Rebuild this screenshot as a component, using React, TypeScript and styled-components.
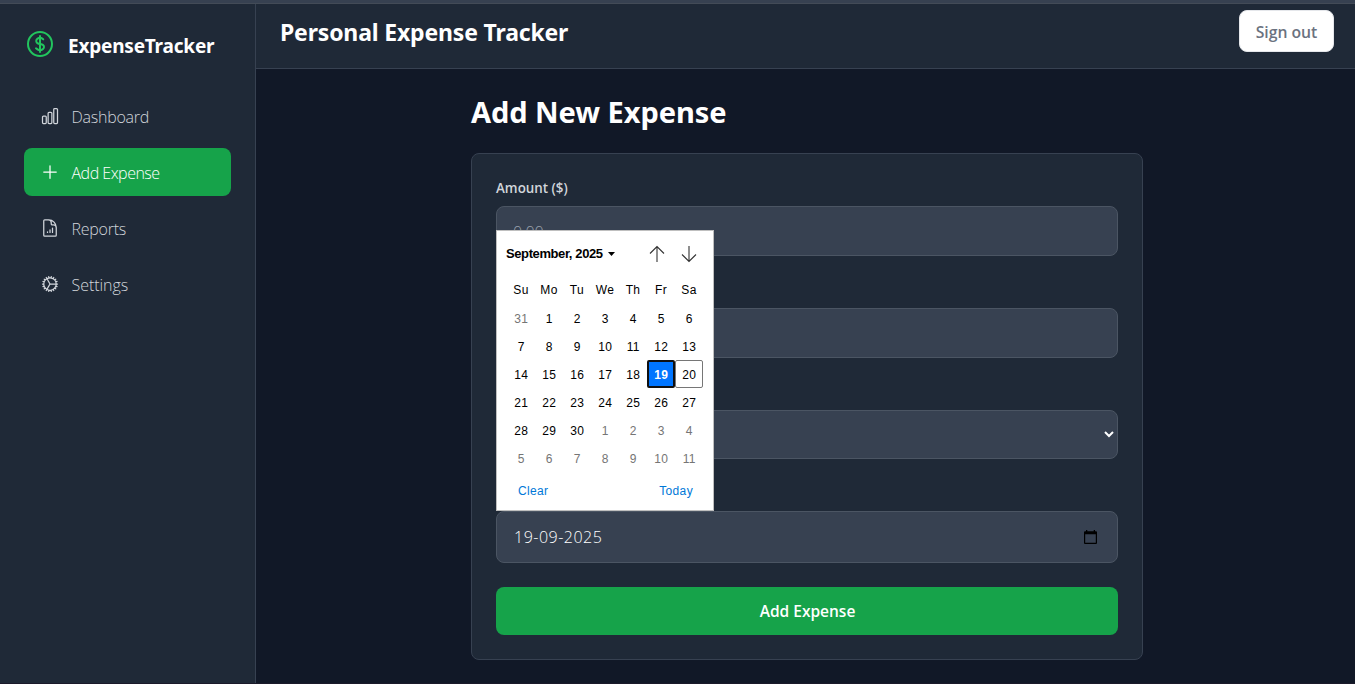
import React from 'react';
import styled, { createGlobalStyle, css } from 'styled-components';
import {
  HiOutlineChartBar,
  HiOutlineCog,
  HiOutlineCurrencyDollar,
  HiOutlineDocumentChartBar,
  HiOutlinePlus,
} from 'react-icons/hi2';
import type { IconType } from 'react-icons';

const GlobalStyle = createGlobalStyle`
  *, *::before, *::after { box-sizing: border-box; }
  body {
    margin: 0;
    background: #111827;
    font-family: 'Open Sans', 'Noto Sans', sans-serif;
    color: #fff;
  }
`;

const Page = styled.div`
  display: flex;
  flex-direction: column;
  height: 684px;
  overflow: hidden;
  border-bottom: 1px solid #1b1a2a;
`;

const TopStrip = styled.div`
  flex: none;
  height: 4px;
  background: #374151;
  border-bottom: 1px solid #434b57;
`;

const Shell = styled.div`
  flex: 1;
  display: flex;
  min-height: 0;
`;

const Sidebar = styled.aside`
  width: 256px;
  flex: none;
  padding: 24px;
  background: #1f2937;
  border-right: 1px solid #374151;
`;

const Brand = styled.div`
  display: flex;
  align-items: center;
  height: 32px;
  color: #22c55e;
`;

const BrandName = styled.span`
  margin: 4px 0 0 12px;
  font: 700 19px/28px 'Noto Sans', sans-serif;
  letter-spacing: -0.2px;
  color: #fff;
`;

const Nav = styled.nav`
  display: grid;
  gap: 8px;
  margin-top: 32px;
`;

const NavItem = styled.a<{ $active?: boolean; $tracking?: number }>`
  display: flex;
  align-items: center;
  gap: 11.5px;
  height: 48px;
  padding: 0 16px;
  border-radius: 8px;
  font-size: 16px;
  font-weight: 300;
  letter-spacing: ${(p) => p.$tracking ?? -0.25}px;
  color: ${(p) => (p.$active ? '#fff' : '#d1d5db')};
  background: ${(p) => (p.$active ? '#16a34a' : 'transparent')};
`;

const NavLabel = styled.span`
  padding-top: 2px;
`;

const Content = styled.div`
  flex: 1;
  display: flex;
  flex-direction: column;
  min-width: 0;
`;

const Header = styled.header`
  display: flex;
  justify-content: space-between;
  align-items: flex-start;
  height: 65px;
  padding: 6px 21px 0 24px;
  background: #1f2937;
  border-bottom: 1px solid #374151;
`;

const HeaderTitle = styled.h1`
  margin: 6px 0 0;
  font: 700 23px/32px 'Noto Sans', sans-serif;
  letter-spacing: -0.17px;
`;

const SignOut = styled.button`
  height: 42px;
  width: 95px;
  padding: 1px 0 0;
  border: 1px solid #e5e7eb;
  border-radius: 8px;
  background: #fff;
  color: #6b7280;
  font: 600 15.75px/24px 'Open Sans', sans-serif;
`;

const Main = styled.main`
  width: 672px;
  margin: 25px 0 0 215px;
`;

const PageTitle = styled.h2`
  margin: 0 0 23px;
  font: 700 29px/36px 'Noto Sans', sans-serif;
  letter-spacing: -0.05px;
`;

const Card = styled.form`
  padding: 24px;
  border: 1px solid #374151;
  border-radius: 8px;
  background: #1f2937;
`;

const Field = styled.div`
  position: relative;
  margin-bottom: 24px;
`;

const Label = styled.label`
  display: block;
  height: 20px;
  margin-bottom: 8px;
  font-size: 13.4px;
  font-weight: 600;
  line-height: 20px;
  color: #d1d5db;
`;

const controlStyle = css`
  display: flex;
  align-items: center;
  justify-content: space-between;
  border: 1px solid #4b5563;
  border-radius: 8px;
  background: #374151;
  font-size: 16px;
  font-weight: 300;
`;

const Control = styled.div<{ $height?: number; $muted?: boolean }>`
  ${controlStyle}
  padding: 1px 16px 0;
  height: ${(p) => p.$height ?? 50}px;
  letter-spacing: ${(p) => (p.$muted ? -0.2 : 0.5)}px;
  color: ${(p) => (p.$muted ? '#9ca3af' : '#fff')};
`;

const SelectControl = styled(Control)`
  justify-content: flex-end;
  padding: 0 3px 0 16px;
`;

const DateControl = styled(Control)`
  padding: 0 20px 0 17px;
`;

const Submit = styled.button`
  display: block;
  width: 100%;
  height: 48px;
  padding: 0 0 0 1px;
  border: 0;
  border-radius: 8px;
  background: #16a34a;
  color: #fff;
  font: 600 15.5px/24px 'Open Sans', sans-serif;
`;

const Picker = styled.div`
  position: absolute;
  left: 0;
  bottom: 52px;
  width: 218px;
  height: 281px;
  padding: 9px 10px 0;
  border: 1px solid #bfbfbf;
  background: #fff;
  color: #000;
  font: 400 12px/28px 'Liberation Sans', Arial, sans-serif;
  letter-spacing: 0.35px;
`;

const PickerHead = styled.div`
  display: flex;
  align-items: center;
  height: 28px;
`;

const Month = styled.span`
  flex: 1;
  display: flex;
  align-items: center;
  gap: 5px;
  margin-left: -1px;
  font-size: 13px;
  font-weight: 700;
  letter-spacing: -0.4px;
`;

const Arrow = styled.svg`
  width: 16px;
  height: 18px;
  margin-right: 6px;
  margin-left: 10px;
  fill: none;
  stroke: #333;
  stroke-width: 1.1;
`;

const Grid = styled.div<{ $head?: boolean }>`
  display: grid;
  grid-template-columns: repeat(7, 28px);
  grid-auto-rows: 28px;
  margin-top: ${(p) => (p.$head ? 8 : 0)}px;
  text-align: center;
`;

type DayKind = 'other' | 'selected' | 'today' | 'normal';

const Day = styled.span<{ $kind: DayKind }>`
  display: flex;
  align-items: center;
  justify-content: center;
  padding: 1px 0 0 0.5px;
  line-height: 14px;
  color: ${(p) => (p.$kind === 'other' ? '#757575' : p.$kind === 'selected' ? '#fff' : '#000')};
  ${(p) =>
    p.$kind === 'selected' &&
    css`
      border: 2px solid #101010;
      border-radius: 2px;
      background: #0075ff;
      font-weight: 700;
    `}
  ${(p) =>
    p.$kind === 'today' &&
    css`
      border: 1px solid #767676;
      border-radius: 2px;
    `}
`;

const PickerFoot = styled.div`
  display: flex;
  justify-content: space-between;
  margin-top: 5px;
  padding: 0 10px 0 11px;
  color: #0078d7;
`;

const links: { label: string; icon: IconType; active?: boolean; tracking?: number }[] = [
  { label: 'Dashboard', icon: HiOutlineChartBar },
  { label: 'Add Expense', icon: HiOutlinePlus, active: true, tracking: -0.5 },
  { label: 'Reports', icon: HiOutlineDocumentChartBar },
  { label: 'Settings', icon: HiOutlineCog, tracking: -0.05 },
];

const weekdays = ['Su', 'Mo', 'Tu', 'We', 'Th', 'Fr', 'Sa'];

const days = Array.from({ length: 42 }, (_, i) => {
  const kind: DayKind =
    i === 0 || i > 30 ? 'other' : i === 19 ? 'selected' : i === 20 ? 'today' : 'normal';
  return { n: i === 0 ? 31 : i > 30 ? i - 30 : i, kind };
});

function DatePicker() {
  return (
    <Picker>
      <PickerHead>
        <Month>
          September, 2025
          <svg width="7" height="4" viewBox="0 0 7 4">
            <path d="M0 0h7L3.5 4z" fill="#000" />
          </svg>
        </Month>
        <Arrow viewBox="0 0 16 18">
          <path d="M8 17V1.5M1 8.5l7-7 7 7" />
        </Arrow>
        <Arrow viewBox="0 0 16 18">
          <path d="M8 1v15.5M1 9.5l7 7 7-7" />
        </Arrow>
      </PickerHead>
      <Grid $head>
        {weekdays.map((d) => (
          <span key={d}>{d}</span>
        ))}
      </Grid>
      <Grid>
        {days.map((d, i) => (
          <Day key={i} $kind={d.kind}>
            {d.n}
          </Day>
        ))}
      </Grid>
      <PickerFoot>
        <span>Clear</span>
        <span>Today</span>
      </PickerFoot>
    </Picker>
  );
}

export default function App() {
  return (
    <>
      <GlobalStyle />
      <Page>
        <TopStrip />
        <Shell>
          <Sidebar>
            <Brand>
              <HiOutlineCurrencyDollar size={32} />
              <BrandName>ExpenseTracker</BrandName>
            </Brand>
            <Nav>
              {links.map(({ label, icon: Icon, active, tracking }) => (
                <NavItem key={label} $active={active} $tracking={tracking}>
                  <Icon size={20} />
                  <NavLabel>{label}</NavLabel>
                </NavItem>
              ))}
            </Nav>
          </Sidebar>
          <Content>
            <Header>
              <HeaderTitle>Personal Expense Tracker</HeaderTitle>
              <SignOut type="button">Sign out</SignOut>
            </Header>
            <Main>
              <PageTitle>Add New Expense</PageTitle>
              <Card>
                <Field>
                  <Label>Amount ($)</Label>
                  <Control $muted>0.00</Control>
                </Field>
                <Field>
                  <Label />
                  <Control />
                </Field>
                <Field>
                  <Label />
                  <SelectControl $height={49}>
                    <svg width="10" height="7" viewBox="0 0 10 7" fill="none" stroke="#fff" strokeWidth="2">
                      <path d="M1 1l4 4 4-4" />
                    </svg>
                  </SelectControl>
                </Field>
                <Field>
                  <Label />
                  <DateControl $height={52}>
                    19-09-2025
                    <svg width="13" height="14" viewBox="0 0 13 14">
                      <path
                        fill="#000"
                        fillRule="evenodd"
                        d="M2 0h1.300v1.200h6.400V0H11v1.200h1q1 0 1 1V13q0 1-1 1H1q-1 0-1-1V2.200q0-1 1-1h1zM1.200 4.300v8.400h10.600V4.300z"
                      />
                    </svg>
                  </DateControl>
                  <DatePicker />
                </Field>
                <Submit type="button">Add Expense</Submit>
              </Card>
            </Main>
          </Content>
        </Shell>
      </Page>
    </>
  );
}
